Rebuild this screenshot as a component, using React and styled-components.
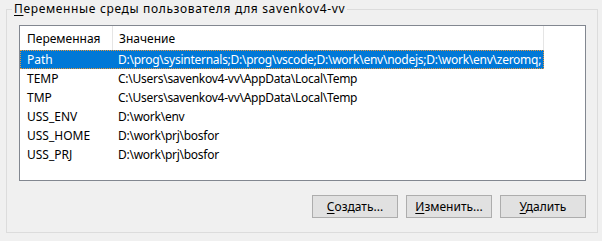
import styled, { createGlobalStyle } from 'styled-components';

const GlobalStyle = createGlobalStyle`
  html, body {
    margin: 0;
    padding: 0;
    background: #f0f0f0;
  }
  body {
    font-family: "Noto Sans", "Open Sans", sans-serif;
    font-size: 12px;
    color: #000;
  }
`;

const Page = styled.div`
  width: 602px;
  height: 241px;
  box-sizing: border-box;
  padding: 1px 0 0 6px;
  background: #f0f0f0;
`;

const Group = styled.fieldset`
  box-sizing: border-box;
  width: 592px;
  height: 232px;
  margin: 0;
  padding: 8px 11px 0 12px;
  border: 1px solid #dcdcdc;
  display: flex;
  flex-direction: column;
`;

const Legend = styled.legend`
  padding: 0 2px;
  margin-left: -7px;
  line-height: 16px;
  letter-spacing: 0.65px;
  white-space: nowrap;
`;

const Key = styled.span`
  text-decoration: underline;
  text-underline-offset: 2px;
`;

const ListBox = styled.div`
  box-sizing: border-box;
  width: 567px;
  height: 156px;
  border: 1px solid #828790;
  background: #fff;
  overflow: hidden;
`;

const Table = styled.div`
  width: 524px;
`;

const HeaderRow = styled.div`
  display: flex;
  height: 24px;
`;

const HeaderCell = styled.div`
  box-sizing: border-box;
  width: ${p => p.$w}px;
  padding-left: ${p => p.$pad}px;
  border-right: 1px solid #e5e5e5;
  display: flex;
  align-items: center;
  white-space: nowrap;
`;

const Row = styled.div`
  box-sizing: border-box;
  display: flex;
  height: 19px;
  align-items: center;
  background: ${p => (p.$selected ? '#0078d7' : 'transparent')};
  color: ${p => (p.$selected ? '#fff' : '#000')};
  border: 1px ${p => (p.$selected ? 'dotted #e9973a' : 'solid transparent')};
`;

const Cell = styled.div`
  box-sizing: border-box;
  width: ${p => p.$w}px;
  padding-left: ${p => p.$pad}px;
  white-space: nowrap;
  overflow: hidden;
`;

const ValueCell = styled(Cell)`
  letter-spacing: -0.26px;
`;

const ButtonBar = styled.div`
  display: flex;
  justify-content: flex-end;
  gap: 8px;
  margin-top: 14px;
`;

const Button = styled.button`
  box-sizing: border-box;
  width: 86px;
  height: 23px;
  padding: 0;
  background: #e1e1e1;
  border: 1px solid #adadad;
  font: inherit;
  color: #000;
`;

const vars = [
  ['Path', 'D:\\prog\\sysinternals;D:\\prog\\vscode;D:\\work\\env\\nodejs;D:\\work\\env\\zeromq;'],
  ['TEMP', 'C:\\Users\\savenkov4-vv\\AppData\\Local\\Temp'],
  ['TMP', 'C:\\Users\\savenkov4-vv\\AppData\\Local\\Temp'],
  ['USS_ENV', 'D:\\work\\env'],
  ['USS_HOME', 'D:\\work\\prj\\bosfor'],
  ['USS_PRJ', 'D:\\work\\prj\\bosfor'],
];

function App() {
  const rows = vars.map(([name, value], index) => (
    <Row key={name} $selected={index === 0}>
      <Cell $w={92} $pad={6}>{name}</Cell>
      <ValueCell $w={430} $pad={5}>{value}</ValueCell>
    </Row>
  ));

  return (
    <Page>
      <GlobalStyle />
      <Group>
        <Legend><Key>П</Key>еременные среды пользователя для savenkov4-vv</Legend>
        <ListBox>
          <Table>
            <HeaderRow>
              <HeaderCell $w={93} $pad={7}>Переменная</HeaderCell>
              <HeaderCell $w={431} $pad={6}>Значение</HeaderCell>
            </HeaderRow>
            {rows}
          </Table>
        </ListBox>
        <ButtonBar>
          <Button><Key>С</Key>оздать...</Button>
          <Button><Key>И</Key>зменить...</Button>
          <Button><Key>У</Key>далить</Button>
        </ButtonBar>
      </Group>
    </Page>
  );
}

export default App;
